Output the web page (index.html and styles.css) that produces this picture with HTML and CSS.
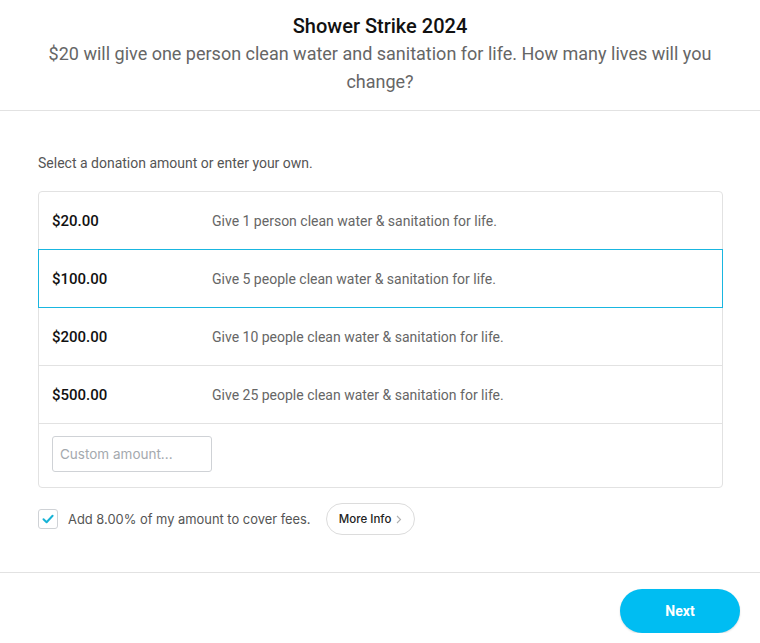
FILE: index.html
```html
<!DOCTYPE html>
<html>
<head>
<meta charset="utf-8">
<link rel="stylesheet" href="styles.css">
</head>
<body>
<header class="header">
  <h1 class="title">Shower Strike 2024</h1>
  <p class="subtitle">$20 will give one person clean water and sanitation for life. How many lives will you change?</p>
</header>
<main class="main">
  <p class="prompt">Select a donation amount or enter your own.</p>
  <div class="options">
    <div class="option"><span class="amount">$20.00</span><span class="desc">Give 1 person clean water &amp; sanitation for life.</span></div>
    <div class="option selected"><span class="amount">$100.00</span><span class="desc">Give 5 people clean water &amp; sanitation for life.</span></div>
    <div class="option"><span class="amount">$200.00</span><span class="desc">Give 10 people clean water &amp; sanitation for life.</span></div>
    <div class="option"><span class="amount">$500.00</span><span class="desc">Give 25 people clean water &amp; sanitation for life.</span></div>
    <div class="custom-row"><input class="custom" type="text" placeholder="Custom amount..."></div>
  </div>
  <div class="fees">
    <span class="checkbox"><svg width="14" height="14" viewBox="0 0 14 14"><path d="M2.5 7.2 L5.6 10.2 L11.6 3.8" fill="none" stroke="#17b3d6" stroke-width="2" stroke-linecap="round" stroke-linejoin="round"/></svg></span>
    <span class="fees-text">Add 8.00% of my amount to cover fees.</span>
    <button class="more">More Info <svg width="6" height="9" viewBox="0 0 6 9"><path d="M1 1 L4.5 4.5 L1 8" fill="none" stroke="#b0b0b0" stroke-width="1.1"/></svg></button>
  </div>
</main>
<footer class="footer">
  <button class="next">Next</button>
</footer>
</body>
</html>
```
FILE: styles.css
```css
* { box-sizing: border-box; }
html, body { margin: 0; padding: 0; background: #fff; }
body { font-family: Roboto, "Liberation Sans", sans-serif; width: 760px; }
.header {
  text-align: center;
  padding: 13px 40px 14px;
  border-bottom: 1px solid #e2e2e2;
}
.title {
  margin: 0;
  font-size: 20px;
  font-weight: 500;
  color: #111;
  line-height: 26px;
}
.subtitle {
  margin: 1px 0 0;
  font-size: 18px;
  line-height: 28px;
  color: #666;
  font-weight: 400;
}
.main { padding: 40px 37px 0 38px; }
.prompt {
  margin: 0 0 16px;
  font-size: 14px;
  line-height: 24px;
  color: #555;
}
.options {
  border: 1px solid #e2e2e2;
  border-radius: 4px;
  display: flex;
  flex-direction: column;
}
.option {
  height: 58px;
  display: flex;
  align-items: center;
  border-bottom: 1px solid #e2e2e2;
  padding-left: 13px;
  margin: 0 -1px;
  border-left: 1px solid transparent;
  border-right: 1px solid transparent;
}
.option.selected {
  border: 1px solid #19b6e0;
  margin-top: -1px;
  height: 59px;
}
.amount {
  width: 160px;
  font-size: 15px;
  font-weight: 500;
  color: #111;
}
.desc {
  font-size: 14px;
  color: #666;
}
.custom-row { padding: 12px 13px 15px; }
.custom {
  width: 160px;
  height: 36px;
  border: 1px solid #cfd2d6;
  border-radius: 3px;
  padding: 0 7px;
  font-family: Inter, "Liberation Sans", sans-serif;
  font-size: 13.5px;
  color: #333;
  outline: none;
}
.custom::placeholder { color: #a4a9ae; }
.fees {
  display: flex;
  align-items: center;
  margin-top: 15px;
}
.checkbox {
  width: 20px;
  height: 20px;
  border: 1px solid #cfd2d6;
  border-radius: 3px;
  display: flex;
  align-items: center;
  justify-content: center;
}
.fees-text {
  margin-left: 10px;
  font-family: Inter, "Liberation Sans", sans-serif;
  font-size: 12.9px;
  color: #555;
}
.more {
  margin-left: 15px;
  height: 32px;
  width: 89px;
  border: 1px solid #dcdcdc;
  border-radius: 16px;
  background: #fff;
  font-family: Inter, "Liberation Sans", sans-serif;
  font-size: 11.5px;
  font-weight: 500;
  color: #222;
  display: flex;
  align-items: center;
  justify-content: center;
  gap: 5px;
  padding: 0 0 0 1px;
}
.footer {
  margin-top: 37px;
  border-top: 1px solid #e2e2e2;
  display: flex;
  justify-content: flex-end;
  padding: 16px 20px 0;
}
.next {
  width: 120px;
  height: 44px;
  border: none;
  border-radius: 22px;
  background: #00bdf2;
  color: #fff;
  font-family: Roboto, "Liberation Sans", sans-serif;
  font-size: 14px;
  font-weight: 700;
  box-shadow: 0 1px 2px rgba(0,0,0,0.15);
}
```
